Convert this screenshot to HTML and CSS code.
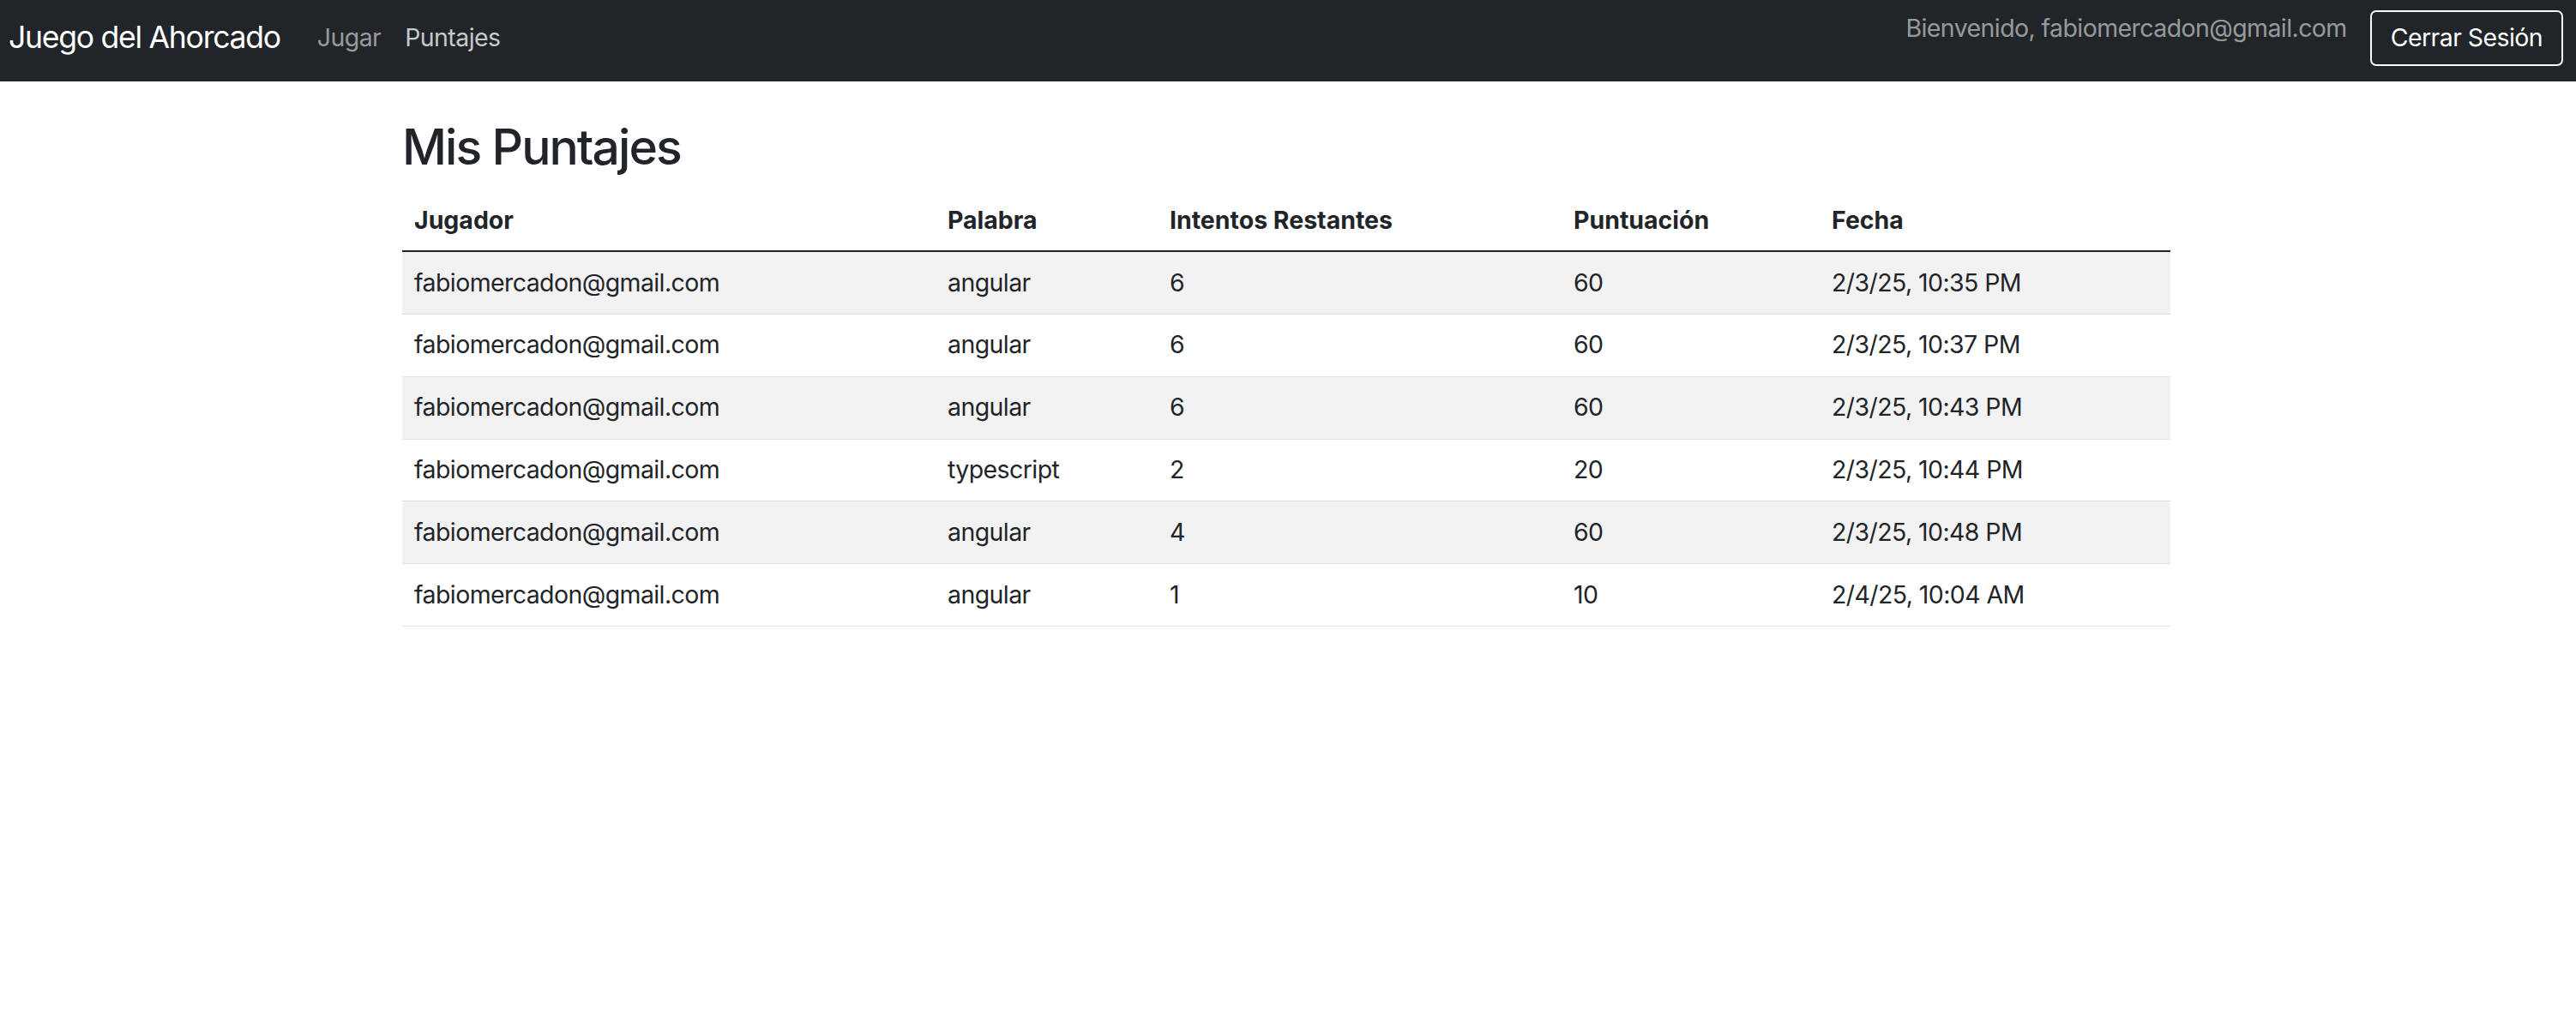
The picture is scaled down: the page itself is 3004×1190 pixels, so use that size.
FILE: index.html
```html
<!DOCTYPE html>
<html lang="es">
<head>
<meta charset="utf-8">
<title>Juego del Ahorcado</title>
<link rel="stylesheet" href="styles.css">
</head>
<body>
<nav class="navbar">
  <a class="brand" href="#">Juego del Ahorcado</a>
  <ul class="nav-links">
    <li><a class="nav-link" href="#">Jugar</a></li>
    <li><a class="nav-link active" href="#">Puntajes</a></li>
  </ul>
  <div class="nav-right">
    <span class="welcome">Bienvenido, fabiomercadon@gmail.com</span>
    <button class="btn-logout" type="button">Cerrar Sesión</button>
  </div>
</nav>
<main class="container">
  <h2 class="title">Mis Puntajes</h2>
  <table class="scores">
    <thead>
      <tr>
        <th class="c-player">Jugador</th>
        <th class="c-word">Palabra</th>
        <th class="c-tries">Intentos Restantes</th>
        <th class="c-score">Puntuación</th>
        <th class="c-date">Fecha</th>
      </tr>
    </thead>
    <tbody>
      <tr><td>fabiomercadon@gmail.com</td><td>angular</td><td>6</td><td>60</td><td>2/3/25, 10:35 PM</td></tr>
      <tr><td>fabiomercadon@gmail.com</td><td>angular</td><td>6</td><td>60</td><td>2/3/25, 10:37 PM</td></tr>
      <tr><td>fabiomercadon@gmail.com</td><td>angular</td><td>6</td><td>60</td><td>2/3/25, 10:43 PM</td></tr>
      <tr><td>fabiomercadon@gmail.com</td><td>typescript</td><td>2</td><td>20</td><td>2/3/25, 10:44 PM</td></tr>
      <tr><td>fabiomercadon@gmail.com</td><td>angular</td><td>4</td><td>60</td><td>2/3/25, 10:48 PM</td></tr>
      <tr><td>fabiomercadon@gmail.com</td><td>angular</td><td>1</td><td>10</td><td>2/4/25, 10:04 AM</td></tr>
    </tbody>
  </table>
</main>
</body>
</html>
```
FILE: styles.css
```css
* { box-sizing: border-box; }

html, body {
  margin: 0;
  padding: 0;
  background: #ffffff;
}

body {
  font-family: "Inter", "Liberation Sans", sans-serif;
  font-size: 28.48px;
  line-height: 1.5;
  color: #212529;
  letter-spacing: -0.02em;
}

.navbar {
  display: flex;
  align-items: center;
  height: 95px;
  padding: 0 15px 6px 10px;
  background: #212529;
}

.brand {
  font-size: 35.6px;
  line-height: 53px;
  letter-spacing: -0.036em;
  color: #ffffff;
  text-decoration: none;
  margin-right: 29px;
  margin-top: -3px;
}

.nav-links {
  display: flex;
  list-style: none;
  margin: 0;
  padding: 0;
}

.nav-link {
  display: block;
  padding: 0 14px;
  line-height: 42.7px;
  color: rgba(255, 255, 255, 0.55);
  text-decoration: none;
}

.nav-link.active {
  color: rgba(255, 255, 255, 0.75);
}

.nav-right {
  margin-left: auto;
  display: flex;
  align-items: center;
  align-self: stretch;
}

.welcome {
  align-self: flex-start;
  padding-top: 12px;
  line-height: 42.7px;
  color: rgba(255, 255, 255, 0.55);
  margin-right: 27px;
}

.btn-logout {
  font-family: inherit;
  font-size: 28.48px;
  letter-spacing: -0.02em;
  line-height: 42.7px;
  height: 65px;
  padding: 0 22px;
  color: #ffffff;
  background: transparent;
  border: 2px solid #f8f9fa;
  border-radius: 7px;
}

.container {
  width: 2062px;
  margin: 43px 0 0 469px;
}

.title {
  margin: 0 0 14px;
  font-size: 57px;
  font-weight: 500;
  line-height: 1.2;
  letter-spacing: -0.034em;
}

.scores {
  width: 100%;
  border-collapse: collapse;
  table-layout: fixed;
}

.scores th,
.scores td {
  padding: 14.5px 14px;
  line-height: 42.8px;
  text-align: left;
  vertical-align: top;
}

.scores th {
  padding-top: 16px;
  padding-bottom: 13px;
  font-weight: 700;
  letter-spacing: 0;
  border-bottom: 2px solid #212529;
}

.scores td {
  border-bottom: 1px solid #dee2e6;
}

.scores tbody tr:nth-child(odd) td {
  background: #f2f2f2;
}

.c-player { width: 622px; }
.c-word { width: 259px; }
.c-tries { width: 471px; }
.c-score { width: 301px; }
.c-date { width: 409px; }
```
